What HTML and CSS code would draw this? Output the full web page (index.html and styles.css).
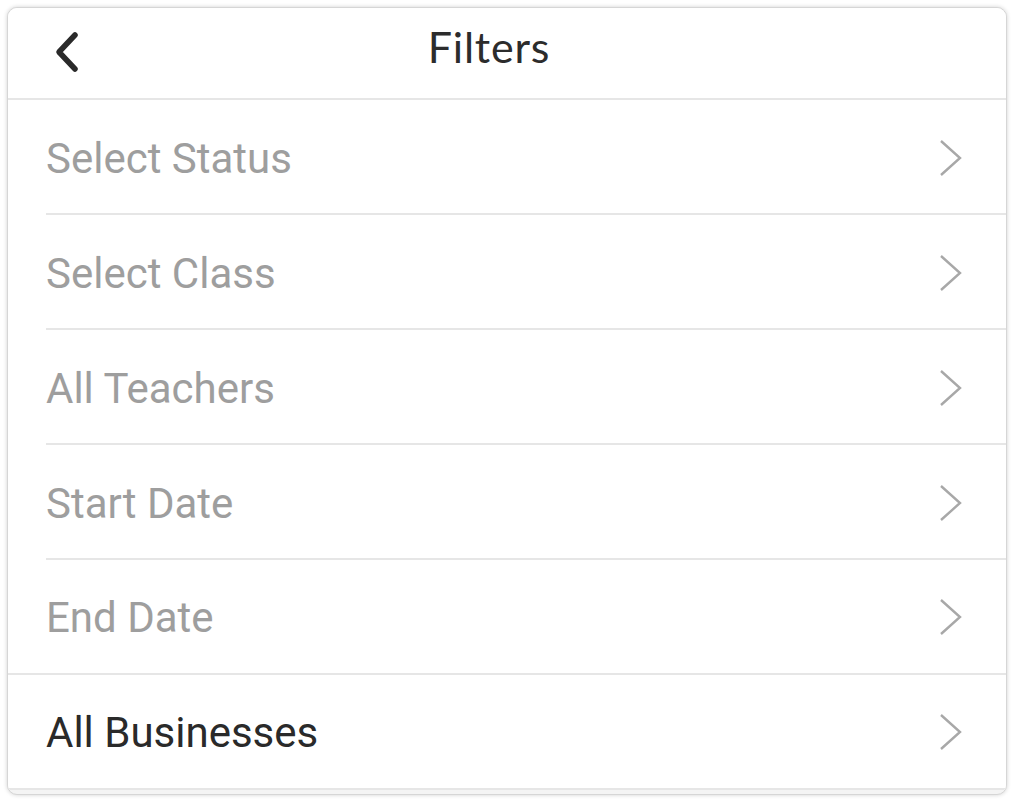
FILE: index.html
```html
<!DOCTYPE html>
<html>
<head>
<meta charset="utf-8">
<link rel="stylesheet" href="styles.css">
</head>
<body>
<div class="card">
  <header class="header">
    <button class="back" aria-label="Back">
      <svg width="30" height="44" viewBox="0 0 30 44"><path d="M23 5 L7 22 L23 39" fill="none" stroke="#2a2a2a" stroke-width="5.5" stroke-linecap="round" stroke-linejoin="round"/></svg>
    </button>
    <h1 class="title">Filters</h1>
  </header>
  <ul class="list">
    <li class="row inset"><span class="label muted">Select Status</span><svg class="chev" width="26" height="38" viewBox="0 0 26 38"><path d="M3 2 L22 19 L3 36" fill="none" stroke="#a8a8a8" stroke-width="2.4"/></svg></li>
    <li class="row inset"><span class="label muted">Select Class</span><svg class="chev" width="26" height="38" viewBox="0 0 26 38"><path d="M3 2 L22 19 L3 36" fill="none" stroke="#a8a8a8" stroke-width="2.4"/></svg></li>
    <li class="row inset"><span class="label muted">All Teachers</span><svg class="chev" width="26" height="38" viewBox="0 0 26 38"><path d="M3 2 L22 19 L3 36" fill="none" stroke="#a8a8a8" stroke-width="2.4"/></svg></li>
    <li class="row inset"><span class="label muted">Start Date</span><svg class="chev" width="26" height="38" viewBox="0 0 26 38"><path d="M3 2 L22 19 L3 36" fill="none" stroke="#a8a8a8" stroke-width="2.4"/></svg></li>
    <li class="row full"><span class="label muted">End Date</span><svg class="chev" width="26" height="38" viewBox="0 0 26 38"><path d="M3 2 L22 19 L3 36" fill="none" stroke="#a8a8a8" stroke-width="2.4"/></svg></li>
    <li class="row full"><span class="label">All Businesses</span><svg class="chev" width="26" height="38" viewBox="0 0 26 38"><path d="M3 2 L22 19 L3 36" fill="none" stroke="#a8a8a8" stroke-width="2.4"/></svg></li>
  </ul>
</div>
</body>
</html>
```

FILE: styles.css
```css
* { box-sizing: border-box; }
html, body {
  margin: 0;
  padding: 0;
  background: #ffffff;
}
body {
  padding: 7px 8px 7px 7px;
  font-family: Roboto, "Liberation Sans", sans-serif;
}
.card {
  height: 788px;
  border: 1px solid #d6d6d6;
  border-radius: 10px;
  box-shadow: 0 0 4px rgba(0,0,0,0.18);
  background: #f4f4f4;
  overflow: hidden;
  display: flex;
  flex-direction: column;
}
.header {
  height: 92px;
  flex: none;
  display: flex;
  align-items: center;
  background: #fff;
  border-bottom: 2px solid #e6e6e6;
  padding-left: 44px;
}
.back {
  border: 0;
  background: none;
  padding: 0;
  width: 30px;
  height: 44px;
  display: flex;
  margin-top: -2px;
}
.title {
  flex: 1;
  margin: -14px 0 0;
  text-align: center;
  padding-right: 110px;
  font-family: Lato, "Open Sans", sans-serif;
  font-weight: 400;
  font-size: 43px;
  letter-spacing: 0.8px;
  color: #2c2c2c;
}
.list {
  list-style: none;
  margin: 0;
  padding: 0;
  background: #fff;
}
.row {
  height: 115px;
  display: flex;
  align-items: center;
  justify-content: space-between;
  padding: 0 42px 0 38px;
  position: relative;
}
.row.inset::after {
  content: "";
  position: absolute;
  left: 38px;
  right: 0;
  bottom: 0;
  border-bottom: 2px solid #e6e6e6;
}
.row.full {
  border-bottom: 2px solid #e6e6e6;
}
.label {
  font-size: 42px;
  color: #2a2a2a;
  letter-spacing: 0;
  margin-top: 2px;
}
.label.muted {
  color: #9e9e9e;
}
.chev {
  display: block;
}
```
